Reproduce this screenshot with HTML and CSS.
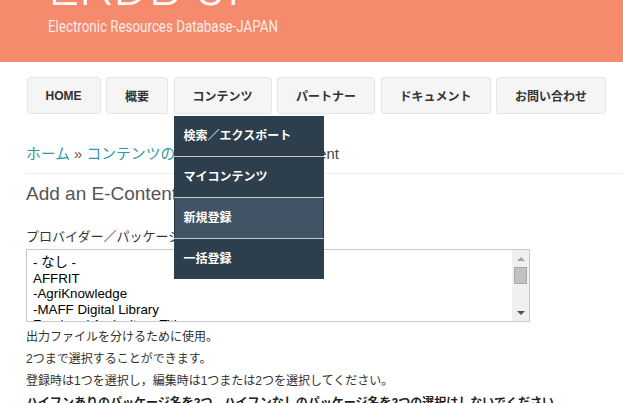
FILE: index.html
```html
<!DOCTYPE html>
<html lang="ja">
<head>
<meta charset="utf-8">
<title>ERDB-JP</title>
<link rel="stylesheet" href="styles.css">
</head>
<body>
<header class="site-header">
  <div class="brand-title">ERDB-JP</div>
  <div class="brand-sub">Electronic Resources Database-JAPAN</div>
</header>
<main class="page">
  <nav class="menu">
    <a class="menu-btn">HOME</a>
    <a class="menu-btn">概要</a>
    <div class="menu-item">
      <a class="menu-btn">コンテンツ</a>
      <ul class="dropdown">
        <li><a>検索／エクスポート</a></li>
        <li><a>マイコンテンツ</a></li>
        <li class="active"><a>新規登録</a></li>
        <li><a>一括登録</a></li>
      </ul>
    </div>
    <a class="menu-btn">パートナー</a>
    <a class="menu-btn">ドキュメント</a>
    <a class="menu-btn">お問い合わせ</a>
  </nav>
  <div class="breadcrumb">
    <a class="crumb-link">ホーム</a> <span class="crumb-sep">»</span> <a class="crumb-link">コンテンツの追加</a> <span class="crumb-sep">»</span> <span class="crumb-current">Add an E-Content</span>
  </div>
  <h1 class="title">Add an E-Content</h1>
  <label class="field-label">プロバイダー／パッケージ名</label>
  <div class="listbox">
    <div class="options">
      <div class="option">- なし -</div>
      <div class="option">AFFRIT</div>
      <div class="option">-AgriKnowledge</div>
      <div class="option">-MAFF Digital Library</div>
      <div class="option">Food and Agriculture Titles</div>
    </div>
    <div class="scrollbar">
      <div class="sb-btn"><span class="arrow-up"></span></div>
      <div class="sb-thumb"></div>
      <div class="sb-track"></div>
      <div class="sb-btn"><span class="arrow-down"></span></div>
    </div>
  </div>
  <div class="desc">
    <p>出力ファイルを分けるために使用。</p>
    <p>2つまで選択することができます。</p>
    <p>登録時は1つを選択し，編集時は1つまたは2つを選択してください。</p>
    <p class="desc-strong">ハイフンありのパッケージ名を2つ，ハイフンなしのパッケージ名を2つの選択はしないでください。</p>
  </div>
</main>
</body>
</html>
```
FILE: styles.css
```css
* { box-sizing: border-box; }
html, body { margin: 0; padding: 0; }
body {
  width: 623px;
  height: 403px;
  overflow: hidden;
  background: #fff;
  color: #333;
  font-family: "Liberation Sans", Arial, "Noto Sans CJK JP", sans-serif;
}

/* header */
.site-header {
  background: #f58a6d;
  height: 62px;
  padding-left: 48px;
  overflow: hidden;
}
.brand-title {
  font-family: "Roboto", sans-serif;
  font-weight: 300;
  font-size: 54px;
  line-height: 54px;
  height: 54px;
  color: #fff;
  margin-top: -40px;
  white-space: nowrap;
}
.brand-sub {
  font-family: "Roboto", sans-serif;
  font-size: 16.5px;
  line-height: 18px;
  margin-top: 4px;
  color: rgba(255, 255, 255, 0.85);
  white-space: nowrap;
  transform: scaleX(0.81);
  transform-origin: left center;
}

/* page */
.page { padding-left: 26px; }

.menu {
  display: flex;
  gap: 5.5px;
  margin: 15px 0 0 0.5px;
}
.menu-item { position: relative; }
.menu-btn {
  display: flex;
  align-items: center;
  height: 37px;
  padding: 0 18px;
  background: #f5f5f5;
  border: 1px solid #e6e6e6;
  border-radius: 3px;
  font-size: 12px;
  font-weight: 700;
  color: #333;
  white-space: nowrap;
}
.dropdown {
  position: absolute;
  top: calc(100% + 1.5px);
  left: 0;
  width: 150px;
  margin: 0;
  padding: 0;
  list-style: none;
  background: #2d3e4d;
  z-index: 10;
}
.dropdown li + li { border-top: 1px solid #c6cacd; }
.dropdown a {
  display: block;
  height: 40px;
  line-height: 40px;
  padding-left: 10px;
  color: #fff;
  font-size: 12px;
  font-weight: 700;
  white-space: nowrap;
}
.dropdown li.active a {
  background: #415465;
  box-shadow: inset 1px 0 0 #26343f, inset -1px 0 0 #26343f;
}

/* breadcrumb */
.breadcrumb {
  margin-top: 30px;
  padding-bottom: 8px;
  border-bottom: 1px solid #eee;
  font-size: 14.8px;
  line-height: 21px;
  white-space: nowrap;
}
.crumb-link { color: #2f98a7; }
.crumb-sep { color: #555; }
.crumb-current { color: #444; }

.title {
  margin: 8px 0 0;
  font-size: 19px;
  line-height: 24px;
  font-weight: 400;
  color: #555;
}

.field-label {
  display: block;
  margin-top: 21.5px;
  font-size: 13px;
  line-height: 18px;
  color: #333;
}

/* listbox */
.listbox {
  display: flex;
  margin-top: 3.5px;
  width: 504px;
  height: 73px;
  border: 1px solid #c8c8c8;
  background: #fff;
}
.options {
  flex: 1;
  overflow: hidden;
  padding: 5px 0 0 6px;
  font-size: 13.33px;
  line-height: 15.5px;
  color: #000;
}
.option { white-space: nowrap; }
.scrollbar {
  width: 17px;
  display: flex;
  flex-direction: column;
  background: #f0f0f0;
}
.sb-btn {
  height: 17px;
  display: flex;
  align-items: center;
  justify-content: center;
}
.arrow-up {
  width: 0; height: 0;
  border-left: 4px solid transparent;
  border-right: 4px solid transparent;
  border-bottom: 4px solid #a3a3a3;
}
.arrow-down {
  width: 0; height: 0;
  border-left: 4px solid transparent;
  border-right: 4px solid transparent;
  border-top: 4px solid #505050;
}
.sb-thumb {
  height: 17px;
  margin: 0 2px;
  background: #c1c1c1;
  border: 1px solid #a9a9a9;
}
.sb-track { flex: 1; }

/* description */
.desc {
  margin-top: 4px;
  font-size: 12px;
  line-height: 22px;
  color: #333;
}
.desc p { margin: 0; white-space: nowrap; }
.desc-strong { font-weight: 700; color: #222; }
```
